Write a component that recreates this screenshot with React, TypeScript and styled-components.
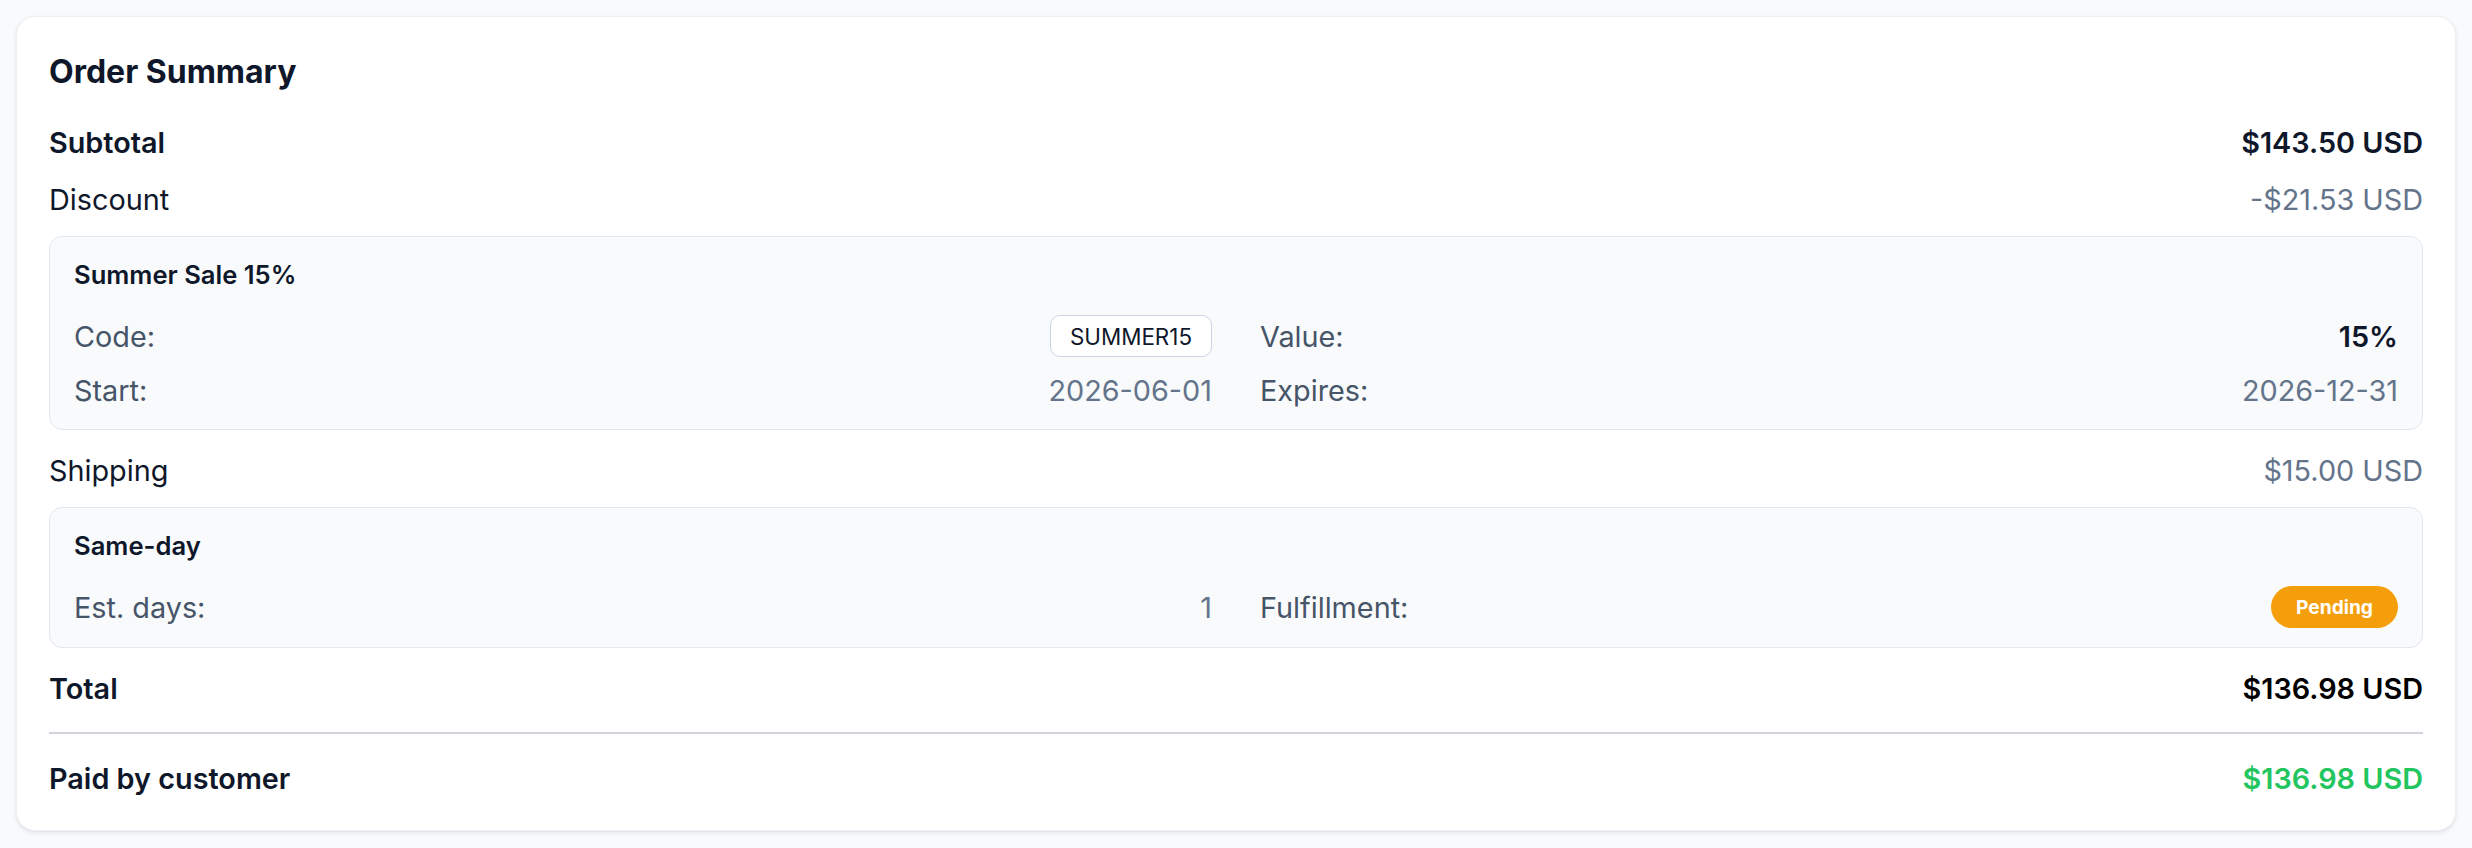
import styled, { createGlobalStyle } from "styled-components";

const GlobalStyle = createGlobalStyle`
  body {
    margin: 0;
    background: #f8fafc;
    font-family: Inter, "Noto Sans", sans-serif;
    color: #0f172a;
  }
`;

const Page = styled.div`
  padding: 16px;
`;

const Card = styled.section`
  background: #ffffff;
  border: 1px solid #eef0f3;
  border-radius: 19px;
  padding: 32px 32px 32px;
  box-shadow: 0 2px 5px rgba(15, 23, 42, 0.08), 0 1px 2px rgba(15, 23, 42, 0.04);
`;

const Title = styled.h2`
  margin: 0 0 28px;
  font-size: 32px;
  line-height: 45px;
  font-weight: 700;
  color: #0f172a;
`;

const Lines = styled.div`
  display: flex;
  flex-direction: column;
  gap: 17px;
`;

const Row = styled.div`
  display: flex;
  align-items: center;
  justify-content: space-between;
  min-height: 40px;
  font-size: 28.8px;
`;

const Label = styled.span<{ $strong?: boolean }>`
  font-weight: ${(p) => (p.$strong ? 600 : 400)};
  color: #0f172a;
`;

type Tone = "strong" | "muted" | "black" | "green";

const toneColor: Record<Tone, string> = {
  strong: "#0f172a",
  muted: "#64748b",
  black: "#000000",
  green: "#22c55e",
};

const Amount = styled.span<{ $tone: Tone }>`
  font-weight: ${(p) => (p.$tone === "muted" ? 400 : 600)};
  color: ${(p) => toneColor[p.$tone]};
`;

const DetailBox = styled.div`
  background: #f8fafc;
  border: 1px solid #e2e8f0;
  border-radius: 13px;
  padding: 19px 24px;
  margin-bottom: 3px;
`;

const DetailTitle = styled.div`
  font-size: 25.6px;
  line-height: 38px;
  font-weight: 600;
  color: #0f172a;
`;

const DetailGrid = styled.div`
  display: grid;
  grid-template-columns: 1fr 1fr;
  column-gap: 48px;
  row-gap: 13px;
  margin-top: 21px;
`;

const DetailItem = styled.div`
  display: flex;
  align-items: center;
  justify-content: space-between;
  min-height: 40px;
  font-size: 28.8px;
`;

const DetailLabel = styled.span`
  color: #475569;
`;

const DetailValue = styled.span<{ $bold?: boolean }>`
  color: ${(p) => (p.$bold ? "#0f172a" : "#64748b")};
  font-weight: ${(p) => (p.$bold ? 600 : 400)};
`;

const CodeTag = styled.span`
  display: inline-flex;
  align-items: center;
  height: 42px;
  box-sizing: border-box;
  padding: 0 19px;
  background: #ffffff;
  border: 1.5px solid #cbd5e1;
  border-radius: 10px;
  font-size: 22.4px;
  color: #0f172a;
`;

const StatusPill = styled.span<{ $bg: string }>`
  display: inline-flex;
  align-items: center;
  height: 42px;
  padding: 0 25px;
  border-radius: 999px;
  background: ${(p) => p.$bg};
  color: #ffffff;
  font-size: 19.2px;
  font-weight: 700;
`;

const PaidRow = styled(Row)`
  border-top: 2px solid #d1d5db;
  margin-top: 24px;
  padding-top: 24px;
`;

export default function App() {
  return (
    <>
      <GlobalStyle />
      <Page>
        <Card>
          <Title>Order Summary</Title>
          <Lines>
            <Row>
              <Label $strong>Subtotal</Label>
              <Amount $tone="strong">$143.50 USD</Amount>
            </Row>
            <Row>
              <Label>Discount</Label>
              <Amount $tone="muted">-$21.53 USD</Amount>
            </Row>
            <DetailBox>
              <DetailTitle>Summer Sale 15%</DetailTitle>
              <DetailGrid>
                <DetailItem>
                  <DetailLabel>Code:</DetailLabel>
                  <CodeTag>SUMMER15</CodeTag>
                </DetailItem>
                <DetailItem>
                  <DetailLabel>Value:</DetailLabel>
                  <DetailValue $bold>15%</DetailValue>
                </DetailItem>
                <DetailItem>
                  <DetailLabel>Start:</DetailLabel>
                  <DetailValue>2026-06-01</DetailValue>
                </DetailItem>
                <DetailItem>
                  <DetailLabel>Expires:</DetailLabel>
                  <DetailValue>2026-12-31</DetailValue>
                </DetailItem>
              </DetailGrid>
            </DetailBox>
            <Row>
              <Label>Shipping</Label>
              <Amount $tone="muted">$15.00 USD</Amount>
            </Row>
            <DetailBox>
              <DetailTitle>Same-day</DetailTitle>
              <DetailGrid>
                <DetailItem>
                  <DetailLabel>Est. days:</DetailLabel>
                  <DetailValue>1</DetailValue>
                </DetailItem>
                <DetailItem>
                  <DetailLabel>Fulfillment:</DetailLabel>
                  <StatusPill $bg="#f59e0b">Pending</StatusPill>
                </DetailItem>
              </DetailGrid>
            </DetailBox>
            <Row>
              <Label $strong>Total</Label>
              <Amount $tone="black">$136.98 USD</Amount>
            </Row>
          </Lines>
          <PaidRow>
            <Label $strong>Paid by customer</Label>
            <Amount $tone="green">$136.98 USD</Amount>
          </PaidRow>
        </Card>
      </Page>
    </>
  );
}
